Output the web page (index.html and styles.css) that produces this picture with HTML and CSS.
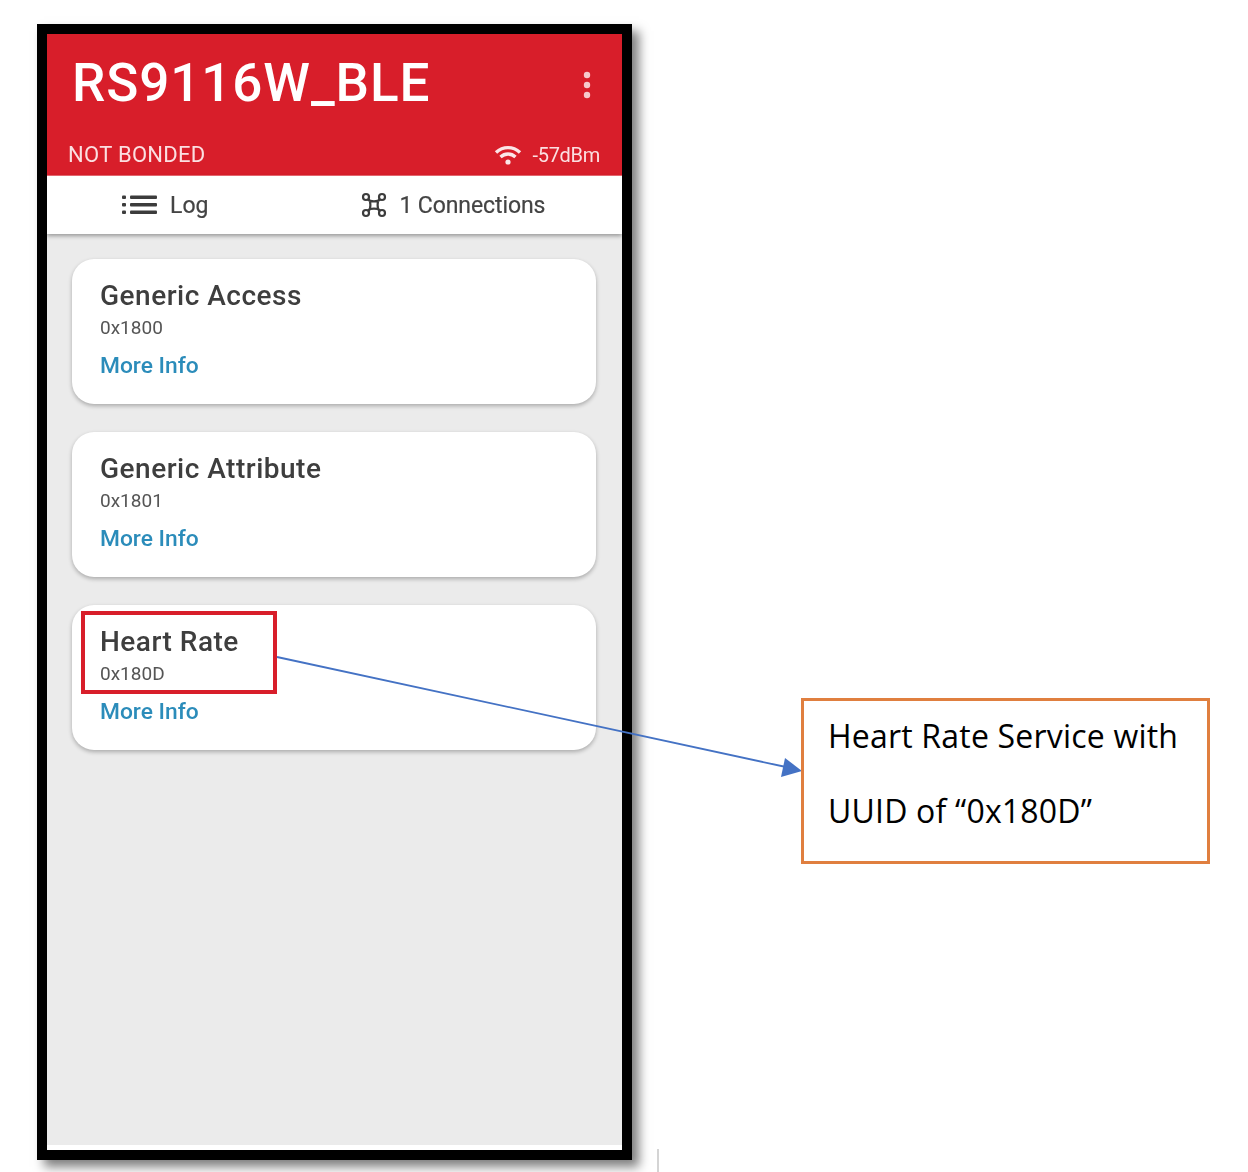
FILE: index.html
```html
<!DOCTYPE html>
<html lang="en">
<head>
<meta charset="utf-8">
<title>RS9116W_BLE</title>
<link rel="stylesheet" href="styles.css">
</head>
<body>
<div class="canvas">
  <div class="phone">
    <div class="screen">
      <header class="appbar">
        <div class="appbar-top">
          <h1 class="title">RS9116W_BLE</h1>
          <svg class="more" width="8" height="28" viewBox="0 0 8 28"><circle cx="4" cy="4" r="3.2"/><circle cx="4" cy="14" r="3.2"/><circle cx="4" cy="24" r="3.2"/></svg>
        </div>
        <div class="appbar-bottom">
          <span class="status">NOT BONDED</span>
          <span class="rssi">
            <svg class="wifi" width="28" height="20" viewBox="0 0 28 20" fill="none" stroke="#fbe6e8" stroke-width="3.4"><path d="M2 7.500C9 1 19 1 26 7.500"/><path d="M6.500 12C11 8 17 8 21.500 12"/><circle cx="14" cy="17" r="2.600" fill="#fbe6e8" stroke="none"/></svg>
            -57dBm
          </span>
        </div>
      </header>
      <nav class="tabs">
        <div class="tab tab-log">
          <svg width="36" height="22" viewBox="0 0 36 22" fill="#3c3c3c"><rect x="0" y="1.500" width="4" height="3.500" rx="1"/><rect x="0" y="9" width="4" height="3.500" rx="1"/><rect x="0" y="16.500" width="4" height="3.500" rx="1"/><rect x="8" y="1.500" width="27" height="3.500" rx="1"/><rect x="8" y="9" width="27" height="3.500" rx="1"/><rect x="8" y="16.500" width="27" height="3.500" rx="1"/></svg>
          <span>Log</span>
        </div>
        <div class="tab tab-conn">
          <svg width="26" height="26" viewBox="0 0 26 26" fill="none" stroke="#3c3c3c" stroke-width="2.200"><circle cx="5" cy="5" r="3"/><circle cx="21" cy="5" r="3"/><circle cx="5" cy="21" r="3"/><circle cx="21" cy="21" r="3"/><path d="M7.500 7C10 9 10 17 7.500 19M18.500 7C16 9 16 17 18.500 19M7 7.500C9 10 17 10 19 7.500M7 18.500C9 16 17 16 19 18.500"/></svg>
          <span>1 Connections</span>
        </div>
      </nav>
      <main class="list">
        <section class="card">
          <h2 class="card-title">Generic Access</h2>
          <p class="card-uuid">0x1800</p>
          <a class="card-link">More Info</a>
        </section>
        <section class="card">
          <h2 class="card-title">Generic Attribute</h2>
          <p class="card-uuid">0x1801</p>
          <a class="card-link">More Info</a>
        </section>
        <section class="card">
          <h2 class="card-title">Heart Rate</h2>
          <p class="card-uuid">0x180D</p>
          <a class="card-link">More Info</a>
        </section>
      </main>
    </div>
  </div>
  <div class="highlight"></div>
  <svg class="arrow" width="1248" height="1172" viewBox="0 0 1248 1172">
    <line x1="277" y1="657" x2="786" y2="767" stroke="#4472c4" stroke-width="1.800"/>
    <polygon points="802,771 781,777 785,758" fill="#4472c4"/>
  </svg>
  <div class="callout">
    <p>Heart Rate Service with</p>
    <p>UUID of “0x180D”</p>
  </div>
  <div class="tick"></div>
</div>
</body>
</html>
```
FILE: styles.css
```css
* { box-sizing: border-box; }
html, body { margin: 0; padding: 0; background: #fff; }
.canvas {
  position: relative;
  width: 1248px;
  height: 1172px;
  padding: 24px 0 0 37px;
  overflow: hidden;
}
.phone {
  width: 595px;
  height: 1136px;
  border: 10px solid #000;
  background: #fff;
  box-shadow: 7px 7px 10px rgba(0, 0, 0, 0.5);
  font-family: Roboto, "Liberation Sans", sans-serif;
}
.screen {
  height: 1111px;
  background: #ebebeb;
  display: flex;
  flex-direction: column;
  filter: blur(0.6px);
}
.appbar {
  height: 142px;
  flex: none;
  background: #d81e2a;
  color: #fff;
  display: flex;
  flex-direction: column;
  border-bottom: 1px solid #ee6a72;
}
.appbar-top {
  height: 100px;
  display: flex;
  justify-content: space-between;
  padding: 36px 31px 0 25px;
}
.title {
  margin: 0;
  font-size: 53px;
  font-weight: 500;
  line-height: 26px;
  letter-spacing: 0.9px;
}
.more { fill: #f6c9cc; margin-top: 1px; }
.appbar-bottom {
  display: flex;
  justify-content: space-between;
  align-items: center;
  padding: 8px 22px 0 21px;
  font-size: 22px;
  color: #fbdfe1;
  line-height: 26px;
}
.status { letter-spacing: 0.3px; }
.rssi {
  display: flex;
  align-items: center;
  gap: 11px;
  font-size: 20px;
  letter-spacing: -0.3px;
}
.tabs {
  height: 58px;
  flex: none;
  background: #fff;
  display: flex;
  align-items: center;
  box-shadow: 0 2px 4px rgba(0, 0, 0, 0.35);
  color: #444;
  font-size: 23px;
  position: relative;
}
.tab { display: flex; align-items: center; }
.tab-log { gap: 12px; margin-left: 75px; }
.tab-conn { gap: 12px; margin-left: 153px; letter-spacing: -0.1px; }
.tab span { -webkit-text-stroke: 0.2px #444; }
.list {
  padding: 25px 26px 0 25px;
  display: flex;
  flex-direction: column;
  gap: 28px;
}
.card {
  height: 145px;
  background: #fff;
  border-radius: 22px;
  box-shadow: 0 2px 4px rgba(0, 0, 0, 0.28);
  padding: 20px 28px 0;
}
.card-title {
  margin: 0;
  font-size: 28px;
  font-weight: 500;
  line-height: 34px;
  color: #3e3e3e;
  letter-spacing: 0.5px;
}
.card-uuid {
  margin: 3px 0 0;
  font-size: 19px;
  line-height: 24px;
  color: #555;
}
.card-link {
  display: block;
  margin-top: 12px;
  font-size: 22.800px;
  font-weight: 500;
  line-height: 28px;
  color: #2b8cba;
}
.highlight {
  position: absolute;
  left: 81px;
  top: 611px;
  width: 196px;
  height: 83px;
  border: 4px solid #d81e2a;
}
.arrow { position: absolute; left: 0; top: 0; }
.callout {
  position: absolute;
  left: 801px;
  top: 698px;
  width: 409px;
  height: 166px;
  border: 3px solid #e07f3f;
  padding: 0 0 0 24px;
  font-family: "Open Sans", "Noto Sans", sans-serif;
  font-size: 32px;
  line-height: 75px;
  letter-spacing: 0.2px;
  color: #000;
  background: #fff;
}
.callout p { margin: 0; position: relative; top: -3px; }
.tick {
  position: absolute;
  left: 657px;
  top: 1149px;
  width: 2px;
  height: 23px;
  background: #d4d4d4;
}
```
